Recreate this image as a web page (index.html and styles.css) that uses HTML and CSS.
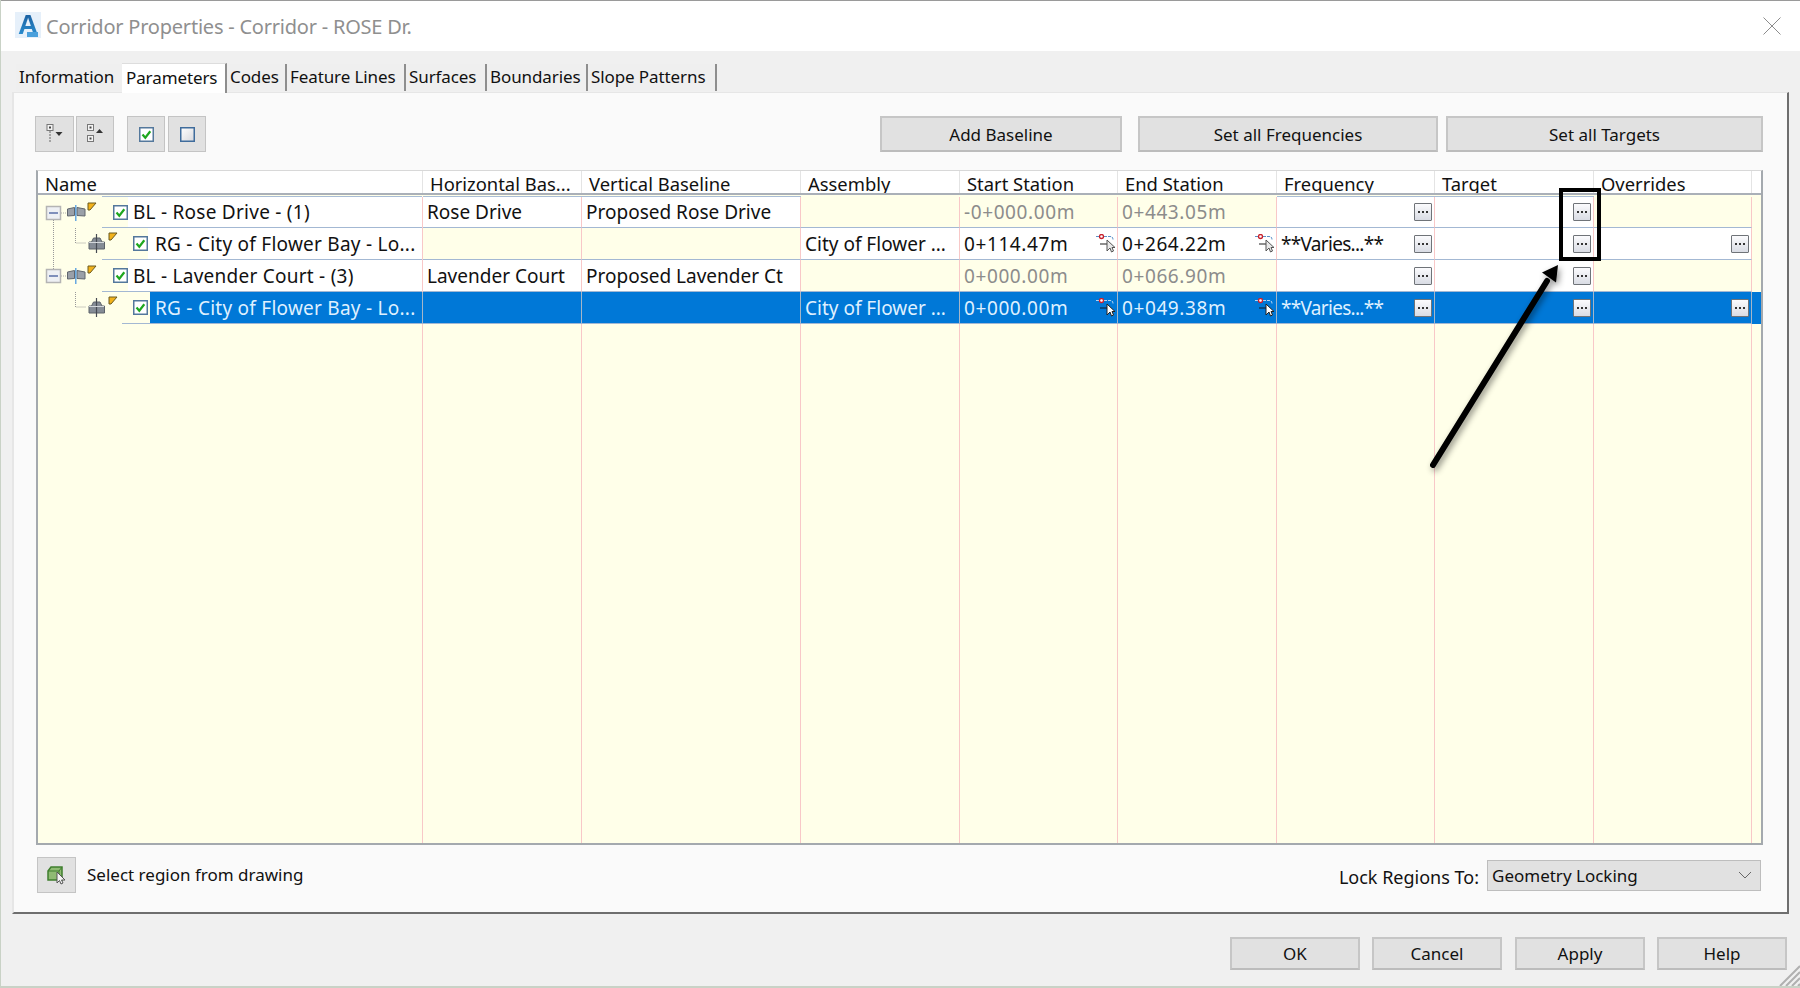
FILE: index.html
```html
<!DOCTYPE html>
<html lang="en">
<head>
<meta charset="utf-8">
<title>Corridor Properties</title>
<link rel="stylesheet" href="styles.css">
</head>
<body>
<svg class="defs" width="0" height="0" aria-hidden="true">
  <defs>
    <symbol id="i-dots" viewBox="0 0 16 16"><rect x="3" y="7" width="2" height="2" fill="#333"/><rect x="7" y="7" width="2" height="2" fill="#333"/><rect x="11" y="7" width="2" height="2" fill="#333"/></symbol>
    <symbol id="i-check" viewBox="0 0 15 15"><rect x=".75" y=".75" width="13.5" height="13.5" fill="#fff" stroke="#54789c" stroke-width="1.5"/><path d="M3.5 7.5l2.8 3.2 5-6.400" fill="none" stroke="#1ea71e" stroke-width="2.2"/></symbol>
    <symbol id="i-pick" viewBox="0 0 19 19"><path d="M0 2.500h14c2 0 3 1 3 3" fill="none" stroke="#5a8fc8" stroke-width="1" stroke-dasharray="3 1"/><circle cx="5.500" cy="2.500" r="2" fill="#fff" stroke="#c8202c" stroke-width="1.300"/><path d="M4 10h7" stroke="#444" stroke-width="1.200"/><path d="M11 6v11l3-3 1.500 4 2-1-1.500-3.500h3z" fill="#e8e8e8" stroke="#555" stroke-width="1"/></symbol>
    <symbol id="i-pick-sel" viewBox="0 0 19 19"><path d="M0 2.500h14c2 0 3 1 3 3" fill="none" stroke="#b8d4f0" stroke-width="1" stroke-dasharray="3 1"/><circle cx="5.500" cy="2.500" r="2" fill="#fff" stroke="#d0202c" stroke-width="1.300"/><path d="M4 10h7" stroke="#102840" stroke-width="1.200"/><path d="M11 6v11l3-3 1.500 4 2-1-1.500-3.500h3z" fill="#fff" stroke="#222" stroke-width="1"/></symbol>
    <symbol id="i-tree-base" viewBox="0 0 64 32" overflow="visible">
      <rect x="8.500" y="9.500" width="14" height="13" fill="#eef0f4" stroke="#b4b4b4" stroke-width="1.500"/><path d="M11 16h9" stroke="#5a6fa8" stroke-width="1.500"/>
      <path d="M23 16h5" stroke="#aaa" stroke-dasharray="1 1"/>
      <path d="M29.500 12l7-1.500v8l-7 .5zM39 10.500l8 1.500v7l-8-.5z" fill="#9aa0a8" stroke="#60666e"/>
      <path d="M37.800 8v16" stroke="#4f9be0" stroke-width="1.300"/>
      <path d="M50 6h8l-6 7h-2z" fill="#f2b21b" stroke="#6a5a20"/>
    </symbol>
    <symbol id="i-tree-region" viewBox="0 0 84 32" overflow="visible">
      <path d="M37.500 0v15h11" fill="none" stroke="#999" stroke-dasharray="1 1"/>
      <path d="M55.500 10h6.500l2 4h2.500v7H51v-7h2.500z" fill="#858c96" stroke="#5c626a"/>
      <path d="M58.500 6v19" stroke="#454a52" stroke-width="1.200"/><path d="M51 14.500h15" stroke="#d4d8dc"/>
      <path d="M71 5h8l-6 7h-2z" fill="#f2b21b" stroke="#6a5a20"/>
    </symbol>
  </defs>
</svg>

<main class="window">
  <header class="titlebar">
    <span class="logo"><span class="logo-a">A</span><span class="logo-badge"></span></span>
    <h1 class="title">Corridor Properties - Corridor - ROSE Dr.</h1>
    <svg class="close" viewBox="0 0 18 18"><path d="M.5.500l17 17M17.500.500l-17 17" stroke="#8c8c8c" fill="none"/></svg>
  </header>

  <nav class="tabs">
    <div class="tab t1">Information</div>
    <div class="tab t2 active">Parameters</div>
    <div class="tab t3">Codes</div>
    <div class="tab t4">Feature Lines</div>
    <div class="tab t5">Surfaces</div>
    <div class="tab t6">Boundaries</div>
    <div class="tab t7">Slope Patterns</div>
  </nav>

  <section class="panel">
    <div class="toolbar">
      <button class="tool tool-a"><svg width="20" height="24" viewBox="0 0 20 24"><rect x="2" y="2.500" width="6" height="6" fill="#f4f4f4" stroke="#777"/><rect x="4" y="4.500" width="2" height="2" fill="#444"/><path d="M5 9v11" stroke="#666" stroke-dasharray="2 1"/><path d="M10.500 10h7l-3.500 4z" fill="#333"/></svg></button>
      <button class="tool tool-b"><svg width="20" height="24" viewBox="0 0 20 24"><rect x="2.500" y="2.500" width="6" height="6" fill="#f4f4f4" stroke="#777"/><rect x="4.500" y="4.500" width="2" height="2" fill="#444"/><rect x="2.500" y="13.500" width="6" height="6" fill="#f4f4f4" stroke="#777"/><rect x="4.500" y="15.500" width="2" height="2" fill="#444"/><path d="M11 11h7l-3.500-4z" fill="#333"/></svg></button>
      <button class="tool tool-c"><svg width="15" height="15"><use href="#i-check"/></svg></button>
      <button class="tool tool-d"><svg width="15" height="15" viewBox="0 0 15 15"><defs><linearGradient id="ubox" x1="0" y1="0" x2="1" y2="1"><stop offset="0" stop-color="#fff"/><stop offset="1" stop-color="#d8d8dc"/></linearGradient></defs><rect x=".75" y=".75" width="13.500" height="13.500" fill="url(#ubox)" stroke="#3f6c9c" stroke-width="1.500"/></svg></button>
      <span class="spacer"></span>
      <button class="btn b-base">Add Baseline</button>
      <button class="btn b-freq">Set all Frequencies</button>
      <button class="btn b-targ">Set all Targets</button>
    </div>

    <div class="grid">
      <div class="cols head">
        <div class="hc">Name</div><div class="hc">Horizontal Bas...</div><div class="hc">Vertical Baseline</div><div class="hc">Assembly</div><div class="hc">Start Station</div><div class="hc">End Station</div><div class="hc">Frequency</div><div class="hc">Target</div><div class="hc">Overrides</div>
      </div>

      <div class="cols row first">
        <div class="c name"><div class="gutter g-base"><svg class="tree" width="64" height="31"><use href="#i-tree-base" height="32"/><path d="M15.500 23v8" stroke="#999" stroke-dasharray="1 1"/></svg></div>
          <div class="nb pad-base"><svg class="chk" width="15" height="15"><use href="#i-check"/></svg><span class="nt ws">BL - Rose Drive - (1)</span></div></div>
        <div class="c w">Rose Drive</div><div class="c w">Proposed Rose Drive</div><div class="c"></div>
        <div class="c dim num">-0+000.00m</div><div class="c dim num">0+443.05m</div>
        <div class="c w end"><button class="eb"><svg width="16" height="16"><use href="#i-dots"/></svg></button></div>
        <div class="c w end"><button class="eb"><svg width="16" height="16"><use href="#i-dots"/></svg></button></div>
        <div class="c"></div>
      </div>

      <div class="cols row">
        <div class="c name"><div class="gutter g-base"><svg class="tree" width="84" height="32"><path d="M15.500 0v32" stroke="#999" stroke-dasharray="1 1"/><use href="#i-tree-region"/></svg></div>
          <div class="nb pad-reg"><svg class="chk" width="15" height="15"><use href="#i-check"/></svg><span class="nt ws-r">RG - City of Flower Bay - Lo...</span></div></div>
        <div class="c"></div><div class="c"></div>
        <div class="c w">City of Flower ...</div>
        <div class="c w sb num">0+114.47m<svg class="pick" width="19" height="19"><use href="#i-pick"/></svg></div>
        <div class="c w sb num">0+264.22m<svg class="pick" width="19" height="19"><use href="#i-pick"/></svg></div>
        <div class="c w sb vary">**Varies...**<button class="eb"><svg width="16" height="16"><use href="#i-dots"/></svg></button></div>
        <div class="c w end"><button class="eb"><svg width="16" height="16"><use href="#i-dots"/></svg></button></div>
        <div class="c w end"><button class="eb"><svg width="16" height="16"><use href="#i-dots"/></svg></button></div>
      </div>

      <div class="cols row">
        <div class="c name"><div class="gutter g-base"><svg class="tree" width="64" height="32"><path d="M15.500 0v9" stroke="#999" stroke-dasharray="1 1"/><use href="#i-tree-base"/></svg></div>
          <div class="nb pad-base"><svg class="chk" width="15" height="15"><use href="#i-check"/></svg><span class="nt ws">BL - Lavender Court - (3)</span></div></div>
        <div class="c w">Lavender Court</div><div class="c w">Proposed Lavender Ct</div><div class="c"></div>
        <div class="c dim num">0+000.00m</div><div class="c dim num">0+066.90m</div>
        <div class="c w end"><button class="eb"><svg width="16" height="16"><use href="#i-dots"/></svg></button></div>
        <div class="c w end"><button class="eb"><svg width="16" height="16"><use href="#i-dots"/></svg></button></div>
        <div class="c"></div>
      </div>

      <div class="cols row sel">
        <div class="c name"><div class="gutter g-reg"><svg class="tree" width="84" height="32"><use href="#i-tree-region"/></svg></div>
          <div class="nb pad-sel"><svg class="chk" width="15" height="15"><use href="#i-check"/></svg><span class="nt blue">RG - City of Flower Bay - Lo...</span></div></div>
        <div class="c"></div><div class="c"></div>
        <div class="c">City of Flower ...</div>
        <div class="c sb num">0+000.00m<svg class="pick" width="19" height="19"><use href="#i-pick-sel"/></svg></div>
        <div class="c sb num">0+049.38m<svg class="pick" width="19" height="19"><use href="#i-pick-sel"/></svg></div>
        <div class="c sb vary">**Varies...**<button class="eb"><svg width="16" height="16"><use href="#i-dots"/></svg></button></div>
        <div class="c end"><button class="eb"><svg width="16" height="16"><use href="#i-dots"/></svg></button></div>
        <div class="c end"><button class="eb"><svg width="16" height="16"><use href="#i-dots"/></svg></button></div>
      </div>

      <div class="cols filler">
        <div class="fc"></div><div class="fc"></div><div class="fc"></div><div class="fc"></div><div class="fc"></div><div class="fc"></div><div class="fc"></div><div class="fc"></div><div class="fc"></div>
      </div>
    </div>

    <div class="bottom">
      <button class="tool pickreg"><svg width="24" height="24" viewBox="0 0 24 24"><path d="M3 8l3-4h11v13H3z" fill="#8fbb73" stroke="#3f7f2e" stroke-width="1.500"/><path d="M3 8h11v9M14 8l3-4" fill="none" stroke="#3f7f2e"/><path d="M12 9v11l2.500-2.500 1.500 3.500 2-1-1.500-3h3.500z" fill="#f4f4f4" stroke="#555"/></svg></button>
      <span class="sel-label">Select region from drawing</span>
      <span class="spacer"></span>
      <span class="lock-label">Lock Regions To:</span>
      <div class="combo"><span>Geometry Locking</span><svg width="14" height="8" viewBox="0 0 14 8"><path d="M1 1l6 6 6-6" fill="none" stroke="#666"/></svg></div>
    </div>
  </section>

  <footer class="actions">
    <button class="btn act">OK</button>
    <button class="btn act">Cancel</button>
    <button class="btn act act-apply">Apply</button>
    <button class="btn act">Help</button>
    <svg class="grip" width="22" height="22" viewBox="0 0 22 22"><path d="M22 2L2 22M22 8L8 22M22 14L14 22M22 20l-2 2" stroke="#b0b0b0" stroke-width="2" fill="none"/></svg>
  </footer>

  <div class="callout-box"></div>
  <svg class="arrow" width="140" height="215" viewBox="0 0 140 215">
    <path d="M8 204L122 20" stroke="#000" stroke-width="6" stroke-linecap="round"/>
    <path d="M133 4l-16 7.500 14 10z" fill="#000"/>
  </svg>
</main>
</body>
</html>
```
FILE: styles.css
```css
* { box-sizing: border-box; }
html, body { margin: 0; padding: 0; height: 100%; }
body { background: #c9d2c6; font-family: "Noto Sans", "Open Sans", "Liberation Sans", sans-serif; color: #111; overflow: hidden; }
.defs { position: absolute; }
button { font: inherit; color: inherit; padding: 0; }

.window {
  position: relative; width: 1799px; height: 986px; margin-left: 1px;
  background: #f0f0f0; border-top: 1px solid #9a9a9a;
  display: flex; flex-direction: column;
  font-size: 17px;
}

.titlebar { height: 50px; background: #fff; display: flex; align-items: center; padding: 0 19px 0 14px; flex: none; }
.logo { width: 26px; height: 26px; background: #e6f0fa; display: flex; justify-content: center; position: relative; flex: none; margin-top: -2px; }
.logo-a { font-weight: 700; font-size: 28px; line-height: 25px; font-family: "Liberation Sans", sans-serif; background: linear-gradient(#1a5c9c, #2b93d6); -webkit-background-clip: text; background-clip: text; color: transparent; }
.logo-badge { position: absolute; right: 3px; bottom: 1px; width: 11px; height: 5px; background: #4aa0dc; }
.title { margin: 0 0 0 5px; font-size: 20px; font-weight: 400; color: #8f8f8f; flex: 1; letter-spacing: -.22px; }
.close { width: 18px; height: 18px; }

.tabs { height: 41px; padding: 11px 0 0 15px; display: flex; align-items: flex-end; flex: none; }
.tab { height: 27px; background: #efefef; border-right: 2px solid #8e8e8e; display: flex; align-items: center; padding: 0 0 2px 3px; margin-bottom: 1px; white-space: nowrap; font-size: 17px; letter-spacing: -.1px; }
.tab.active { height: 30px; margin-bottom: -1px; background: #fff; border-top: 1px solid #ddd; position: relative; padding-left: 4px; }
.t1 { width: 106px; border-right: 0; }
.t2 { width: 105px; }
.t3 { width: 60px; }
.t4 { width: 119px; }
.t5 { width: 81px; }
.t6 { width: 101px; }
.t7 { width: 129px; }

.panel { margin: 0 11px; height: 822px; flex: none; background: #fafafa; border: solid #e6e6e6; border-width: 1px 2px 2px 2px; border-right-color: #6e6e6e; border-bottom-color: #6e6e6e; padding: 23px 24px 0 22px; display: flex; flex-direction: column; }

.toolbar { height: 36px; display: flex; flex: none; margin-left: -1px; }
.spacer { flex: 1; }
.tool { height: 36px; background: #e1e1e1; border: 1px solid #c4c4c4; display: flex; align-items: center; justify-content: center; }
.tool-a { width: 39px; margin-right: 2px; }
.tool-b { width: 38px; margin-right: 13px; }
.tool-c { width: 38px; margin-right: 3px; }
.tool-d { width: 38px; }
.btn { height: 36px; background: #e1e1e1; border: 2px solid #c6c6c6; border-bottom-color: #bcbcbc; font-size: 17px; }
.b-base { width: 242px; margin-right: 16px; }
.b-freq { width: 300px; margin-right: 8px; }
.b-targ { width: 317px; }

.grid { margin-top: 18px; height: 675px; flex: none; background: #ffffe9; border: solid #a4a9ae; border-width: 1px 2px 2px 2px; border-top-color: #d8d8d8; display: flex; flex-direction: column; }
.cols { display: grid; grid-template-columns: 385px 159px 219px 159px 158px 159px 158px 159px 158px; flex: none; }

.head { height: 24px; background: #fff; border-bottom: 2px solid #aab0b8; margin-bottom: 2px; overflow: hidden; font-size: 18.4px; }
.hc { padding: 0 0 0 7px; line-height: 25px; border-right: 1px solid #e4e4e4; white-space: nowrap; overflow: hidden; height: 24px; }

.row { height: 32px; font-size: 19px; }
.row.first { height: 31px; }
.c { height: 100%; border-right: 1px solid #f8c8c8; border-bottom: 1px solid #a3b8d3; padding: 0 4px; display: flex; align-items: center; white-space: nowrap; overflow: hidden; }
.w { background: #fff; }
.dim { color: #8c8c8c; }
.num { letter-spacing: .6px; }
.vary { letter-spacing: -.7px; }
.end { justify-content: flex-end; padding-right: 2px; }
.sb { justify-content: space-between; padding-right: 2px; }
.first .w, .first .nb { box-shadow: 0 -1px 0 #a9bdd6; }
.first .c { overflow: visible; }

.name { padding: 0; align-items: stretch; border-bottom: 0; letter-spacing: .25px; }
.gutter { flex: none; position: relative; }
.g-base { width: 64px; }
.g-reg { width: 84px; }
.tree { display: block; overflow: visible; }
.nb { flex: 1; display: flex; align-items: center; min-width: 0; height: 100%; border-bottom: 1px solid #a3b8d3; position: relative; }
.pad-base { padding-left: 11px; }
.pad-reg { padding-left: 31px; }
.pad-sel { padding-left: 11px; }
.chk { flex: none; display: block; }
.nt { flex: 1; align-self: stretch; display: flex; align-items: center; padding-left: 5px; overflow: hidden; }
.ws { background: #fff; }
.ws-r { background: #fff; padding-left: 7px; }
.blue { background: #0078d7; color: #dff0ff; margin-left: 2px; padding-left: 5px; }

.sel { background: #0078d7; width: 1723px; }
.sel .c { border-right-color: #a5b6c8; }
.sel .name { background: #ffffe9; }
.sel .c:not(.name) { background: #0078d7; color: #dff0ff; }

.eb { width: 18px; height: 18px; border: 1px solid #6f7378; border-radius: 1px; background: linear-gradient(#fbfbfd, #d9dce4); display: flex; align-items: center; justify-content: center; flex: none; letter-spacing: 0; }
.eb svg { display: block; }
.pick { flex: none; margin-top: -1px; }

.filler { flex: 1; }
.fc { border-right: 1px solid #f8c8c8; }

.bottom { display: flex; align-items: center; margin-top: 12px; height: 36px; flex: none; }
.pickreg { width: 39px; margin-left: 1px; }
.sel-label { margin-left: 11px; margin-top: -2px; font-size: 17px; }
.lock-label { font-size: 18px; margin-right: 8px; margin-top: 3px; }
.combo { width: 274px; height: 31px; margin-right: 2px; background: #e1e1e1; border: 1px solid #bdbdbd; display: flex; align-items: center; justify-content: space-between; padding: 0 8px 0 4px; }

.actions { flex: 1; display: flex; padding: 23px 13px 0 0; justify-content: flex-end; position: relative; }
.act { width: 130px; height: 33px; margin-left: 12px; }
.act-apply { margin-left: 13px; }
.grip { position: absolute; right: 0; bottom: 0; }

.callout-box { position: absolute; left: 1558px; top: 187px; width: 42px; height: 73px; border: 4px solid #000; }
.arrow { position: absolute; left: 1424px; top: 260px; filter: drop-shadow(2px 3px 3px rgba(0,0,0,.45)); }
```
